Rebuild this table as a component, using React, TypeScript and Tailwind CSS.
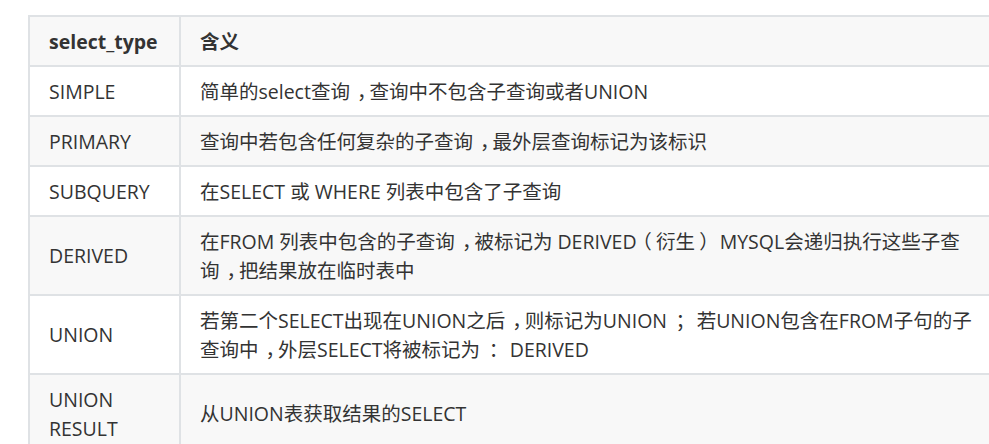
const rows: { type: string[]; desc: string; shade: boolean }[] = [
  { type: ['SIMPLE'], desc: '简单的select查询，查询中不包含子查询或者UNION', shade: false },
  { type: ['PRIMARY'], desc: '查询中若包含任何复杂的子查询，最外层查询标记为该标识', shade: true },
  { type: ['SUBQUERY'], desc: '在SELECT 或 WHERE 列表中包含了子查询', shade: false },
  {
    type: ['DERIVED'],
    desc: '在FROM 列表中包含的子查询，被标记为 DERIVED（衍生） MYSQL会递归执行这些子查询，把结果放在临时表中',
    shade: true,
  },
  {
    type: ['UNION'],
    desc: '若第二个SELECT出现在UNION之后，则标记为UNION ； 若UNION包含在FROM子句的子查询中，外层SELECT将被标记为 ： DERIVED',
    shade: false,
  },
  { type: ['UNION', 'RESULT'], desc: '从UNION表获取结果的SELECT', shade: true },
];

// centre full-width punctuation like the original page's font does
function Desc({ text }: { text: string }) {
  return (
    <>
      {text.split(/([，；：（）])/).map((part, i) => {
        if (part === '，') return <span key={i} className="relative left-[0.36em]">，</span>;
        if (part === '；' || part === '：')
          return <span key={i} className="relative left-[0.18em]">{part}</span>;
        if (part === '（') return <span key={i} className="relative -left-[0.22em]">（</span>;
        if (part === '）') return <span key={i} className="relative left-[0.22em]">）</span>;
        return part;
      })}
    </>
  );
}

export default function App() {
  return (
    <div
      className="w-[989px] h-[444px] overflow-hidden bg-white pl-[28px] pt-[15px] text-[19.5px] text-[#333333]"
      style={{ fontFamily: '"Open Sans", "Noto Sans CJK SC", sans-serif' }}
    >
      <table className="border-collapse w-[966px] table-fixed">
        <colgroup>
          <col className="w-[151px]" />
          <col />
        </colgroup>
        <thead>
          <tr className="bg-[#f8f8f8]">
            <th className="border-2 border-[#dfe2e5] px-[19px] py-[9.5px] leading-[29px] text-left font-bold">
              select_type
            </th>
            <th className="border-2 border-[#dfe2e5] px-[19px] py-[9.5px] leading-[29px] text-left font-bold">
              含义
            </th>
          </tr>
        </thead>
        <tbody>
          {rows.map((r, i) => (
            <tr key={i} className={r.shade ? 'bg-[#f8f8f8]' : 'bg-white'}>
              <td className="border-2 border-[#dfe2e5] px-[19px] py-[9.5px] leading-[29px] align-middle">
                {r.type.map((t) => (
                  <div key={t}>{t}</div>
                ))}
              </td>
              <td className="border-2 border-[#dfe2e5] pl-[19px] pr-[18px] py-[9.5px] leading-[29px] align-middle">
                <Desc text={r.desc} />
              </td>
            </tr>
          ))}
        </tbody>
      </table>
    </div>
  );
}
